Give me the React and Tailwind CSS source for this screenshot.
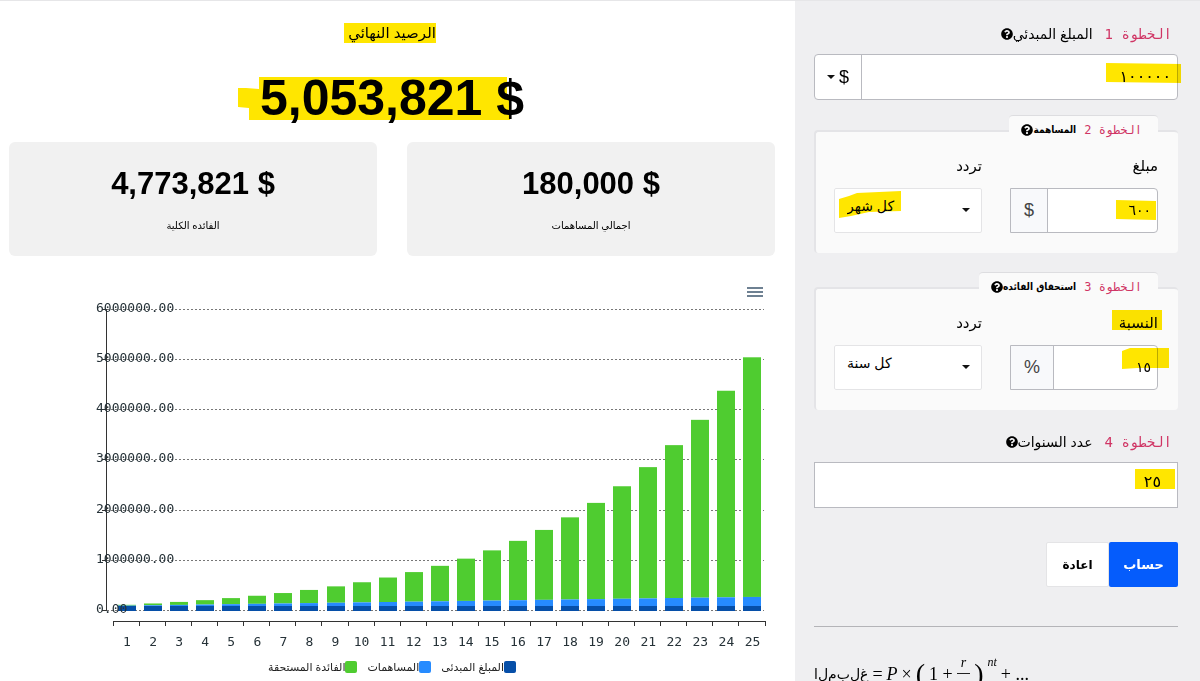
import React, { useState } from 'react';
import { FaQuestionCircle } from 'react-icons/fa';

const INITIAL = 100000;
const YEARLY = 7200;
const RATE = 0.15;
const YEARS = 25;

const buildRows = () => {
  const rows = [];
  let balance = INITIAL;
  for (let year = 1; year <= YEARS; year++) {
    balance = (balance + YEARLY) * (1 + RATE);
    rows.push({ year, balance, contributed: INITIAL + YEARLY * year });
  }
  return rows;
};

const Highlight = ({ className, points, viewBox }) => (
  <svg
    aria-hidden="true"
    viewBox={viewBox}
    preserveAspectRatio="none"
    className={`absolute pointer-events-none mix-blend-multiply ${className}`}
  >
    <polygon points={points} fill="#ffe600" />
  </svg>
);

const Caret = ({ className }) => (
  <svg aria-hidden="true" viewBox="0 0 8 4" className={`h-1 w-2 ${className}`}>
    <path d="M0 0h8L4 4z" fill="#111" />
  </svg>
);

const Step = ({ number, small, children }) => (
  <span className="inline-flex items-center">
    <code className={`font-['DejaVu_Sans_Mono',monospace] text-[#d03565] ${small ? 'text-[12px]' : 'text-[14px]'}`}>
      الخطوة {number}
    </code>
    <span
      className={
        small
          ? "ms-2 font-['DejaVu_Sans_Condensed','DejaVu_Sans',sans-serif] text-[10px] font-bold"
          : 'ms-3 text-[14px]'
      }
    >
      {children}
    </span>
    <FaQuestionCircle className="size-3 shrink-0" />
  </span>
);

const StatCard = ({ value, label }) => (
  <div className="flex h-[114px] flex-col items-center rounded-md bg-[#f1f1f1] pt-6">
    <p dir="ltr" className="text-[31px] leading-9 font-bold">{value}</p>
    <p className="mt-4 text-[10px] leading-4">{label}</p>
  </div>
);

const AmountField = ({ id, label, unit, defaultValue, labelMark, mark }) => (
  <div>
    <label htmlFor={id} className="relative block w-fit text-[15px] leading-6">
      {label}
      {labelMark}
    </label>
    <div className="relative mt-[10px] flex h-[45px] rounded-s border border-[#b9bac0] bg-white">
      <input
        id={id}
        type="text"
        defaultValue={defaultValue}
        className="min-w-0 flex-1 rounded-s px-[6px] text-[14px] outline-none"
      />
      <span className="flex items-center border-s border-[#b9bac0] bg-[#f8f9fb] px-[13px] text-[18px] text-[#444]">
        {unit}
      </span>
      {mark}
    </div>
  </div>
);

const FrequencyField = ({ id, options, mark }) => (
  <div>
    <label htmlFor={id} className="block text-[15px] leading-6">تردد</label>
    <div dir="ltr" className="relative mt-[10px]">
      <select
        id={id}
        className="h-[45px] w-full appearance-none rounded-xs border border-[#e4e4e6] bg-white pb-2 pl-3 text-[14px] outline-none"
      >
        {options.map((option) => (
          <option key={option}>{option}</option>
        ))}
      </select>
      <Caret className="pointer-events-none absolute top-5 right-3" />
      {mark}
    </div>
  </div>
);

const Panel = ({ title, number, children }) => (
  <fieldset className="mt-[15px] min-w-0">
    <legend className="contents">
      <span className="relative z-10 ms-5 -mb-[13px] flex h-7 w-fit items-center rounded-t-sm border-t border-[#dddde0] bg-[#fafafa] ps-4 pe-3">
        <Step number={number} small>{title}</Step>
      </span>
    </legend>
    <div className="rounded-sm border-t-2 border-e-2 border-[#e4e4e7] bg-[#fafafa] ps-5 pe-[18px] pt-[22px] pb-5">
      <div className="grid grid-cols-2 gap-7">{children}</div>
    </div>
  </fieldset>
);

const GrowthChart = ({ rows }) => {
  const base = 331;
  const scale = 50.2 / 1000000;
  const left = 104;
  const step = 26.06;
  const ticks = [0, 1, 2, 3, 4, 5, 6];

  return (
    <svg
      viewBox="0 0 766 376"
      role="img"
      aria-label="نمو الرصيد"
      className="block w-full font-['DejaVu_Sans_Mono',monospace] text-[13px]"
      direction="ltr"
    >
      <g stroke="#6e8192" strokeWidth="2">
        <path d="M738 8h16M738 12h16M738 16h16" />
      </g>
      <g stroke="#777" strokeDasharray="2 2">
        {ticks.map((n) => (
          <line key={n} x1="98" x2="755" y1={Math.round(base - n * 50.2) - 0.5} y2={Math.round(base - n * 50.2) - 0.5} />
        ))}
      </g>
      {rows.map(({ year, balance, contributed }) => {
        const x = Math.round(left + (year - 0.5) * step - 8);
        return (
          <g key={year}>
            <rect x={x} y={base - balance * scale} width="18" height={(balance - contributed) * scale} fill="#4fcc30" />
            <rect x={x} y={base - contributed * scale} width="18" height={(contributed - INITIAL) * scale} fill="#268bff" />
            <rect x={x} y={base - INITIAL * scale} width="18" height={INITIAL * scale} fill="#064fa8" />
          </g>
        );
      })}
      <path d="M97.5 29v302" stroke="#333" fill="none" />
      <path d="M104 341.5h652" stroke="#333" fill="none" />
      <g stroke="#333">
        {[...rows.map((r) => r.year), 0].map((n) => (
          <line key={n} x1={Math.round(left + n * step) + 0.5} x2={Math.round(left + n * step) + 0.5} y1="341" y2="346" />
        ))}
        {ticks.map((n) => (
          <line key={n} x1="93" x2="98" y1={Math.round(base - n * 50.2) - 0.5} y2={Math.round(base - n * 50.2) - 0.5} />
        ))}
      </g>
      <g fill="#263238">
        {ticks.map((n) => (
          <text key={n} x="87" y={base - n * 50.2 + 2}>{(n * 1000000).toFixed(2)}</text>
        ))}
        {rows.map(({ year }) => (
          <text key={year} x={left + 1 + (year - 0.5) * step} y="366" textAnchor="middle">{year}</text>
        ))}
      </g>
    </svg>
  );
};

const LegendItem = ({ color, children }) => (
  <li className="flex items-center">
    <span className={`size-3 rounded-xs ${color}`} />
    {children}
  </li>
);

const Formula = () => (
  <p dir="ltr" className="flex items-center gap-1 font-['Liberation_Serif',serif] text-[18px] leading-6 whitespace-nowrap">
    <bdo dir="ltr" className="font-['DejaVu_Sans',sans-serif] text-[14px]">
      {[...'المبلغ'].join('\u200c')}
    </bdo>
    <span>=</span>
    <i>P</i>
    <span>×</span>
    <span className="text-[28px] leading-6">(</span>
    <span>1 +</span>
    <span className="flex flex-col items-center text-[14px] leading-5">
      <i className="border-b border-[#222] px-1">r</i>
      <i>n</i>
    </span>
    <span className="text-[28px] leading-6">)</span>
    <sup className="-top-3 text-[12px] italic">nt</sup>
    <span>+ ...</span>
  </p>
);

export default function App() {
  const [rows] = useState(buildRows);

  return (
    <div
      dir="rtl"
      className="grid h-screen grid-cols-[27fr_53fr] overflow-hidden border-t border-[#e6e6e8] bg-white font-['Liberation_Sans','DejaVu_Sans',sans-serif] text-black"
    >
      <aside className="bg-[#efeff1] ps-[22px] pe-[19px] pt-[21px]">
        <form onSubmit={(e) => e.preventDefault()}>
          <label htmlFor="initial" className="flex h-6 items-center ps-[6px]">
            <Step number="1">المبلغ المبدئي</Step>
          </label>
          <div className="relative mt-2 flex h-[46px] rounded border border-[#b9bac0] bg-white">
            <input
              id="initial"
              type="text"
              defaultValue="١٠٠٠٠٠"
              className="min-w-0 flex-1 rounded-s px-[6px] text-[16px] outline-none"
            />
            <button type="button" aria-label="العملة" className="flex w-[47px] items-center justify-center gap-1 border-s border-[#b9bac0] text-[18px]">
              $
              <Caret />
            </button>
            <Highlight className="-right-1 top-2 h-5 w-[75px]" viewBox="0 0 75 20" points="0,0 75,1 75,20 0,19" />
          </div>

          <Panel number="2" title="المساهمة">
            <AmountField
              id="amount"
              label="مبلغ"
              unit="$"
              defaultValue="٦٠٠"
              mark={<Highlight className="right-px top-[11px] h-5 w-10" viewBox="0 0 40 20" points="0,0 40,1 40,20 0,19" />}
            />
            <FrequencyField
              id="amount-frequency"
              options={['كل شهر', 'كل سنة']}
              mark={
                <Highlight
                  className="left-[5px] top-[3px] h-[27px] w-[62px]"
                  viewBox="0 0 62 27"
                  points="0,8 10,5 18,2 40,1 62,0 62,20 30,21 12,25 0,27"
                />
              }
            />
          </Panel>

          <div className="mt-[19px]">
            <Panel number="3" title="استحقاق الفائده">
              <AmountField
                id="rate"
                label="النسبة"
                unit="%"
                defaultValue="١٥"
                labelMark={<Highlight className="-right-1 -top-px h-5 w-[50px]" viewBox="0 0 50 20" points="0,0 50,0 50,20 0,20" />}
                mark={<Highlight className="-right-3 top-[2px] h-[21px] w-[47px]" viewBox="0 0 47 21" points="0,3 8,0 47,0 47,20 15,20 0,21" />}
              />
              <FrequencyField id="rate-frequency" options={['كل سنة', 'كل شهر']} />
            </Panel>
          </div>

          <label htmlFor="years" className="mt-5 flex h-6 items-center ps-[6px]">
            <Step number="4">عدد السنوات</Step>
          </label>
          <div className="relative mt-2">
            <input
              id="years"
              type="text"
              defaultValue="٢٥"
              className="h-[46px] w-full border border-[#b9bac0] bg-white px-4 pb-2 text-[16px] outline-none"
            />
            <Highlight className="right-[3px] top-[7px] h-5 w-10" viewBox="0 0 40 20" points="0,0 40,0 40,20 0,20" />
          </div>

          <div className="mt-[34px] flex">
            <button type="submit" className="h-[45px] w-[69px] rounded-xs bg-[#055cfc] text-[13px] font-bold text-white">
              حساب
            </button>
            <button type="reset" className="h-[45px] w-[63px] rounded-xs border border-[#e4e4e6] bg-white text-[12px] font-bold">
              اعادة
            </button>
          </div>
        </form>
        <hr className="mt-[39px] mb-[26px] border-[#b4b4b8]" />
        <Formula />
      </aside>

      <main className="min-w-0 ps-5 pe-[9px] pt-5">
        <div className="flex flex-col items-center">
          <h1 className="relative text-[15px] leading-6">
            الرصيد النهائي
            <Highlight className="-left-1 top-[2px] h-5 w-[92px]" viewBox="0 0 92 20" points="0,0 92,0 92,20 0,20" />
          </h1>
          <p dir="ltr" className="relative mt-[25px] text-[50px] leading-14 font-bold">
            5,053,821 $
            <Highlight
              className="-left-[22px] top-[7px] h-[43px] w-[272px]"
              viewBox="0 0 272 43"
              points="21,0 269,0 269,22 272,22 272,43 11,43 11,31 0,30 0,11 8,11 21,12"
            />
          </p>
        </div>

        <div className="mt-4 grid grid-cols-2 gap-[30px]">
          <StatCard value="180,000 $" label="اجمالي المساهمات" />
          <StatCard value="4,773,821 $" label="الفائده الكلية" />
        </div>

        <div className="mt-6">
          <GrowthChart rows={rows} />
          <ul className="mt-[3px] flex justify-center gap-[10px] text-[11px] leading-4 text-[#222]">
            <LegendItem color="bg-[#064fa8]">المبلغ المبدئى</LegendItem>
            <LegendItem color="bg-[#268bff]">المساهمات</LegendItem>
            <LegendItem color="bg-[#4fcc30]">الفائدة المستحقة</LegendItem>
          </ul>
        </div>
      </main>
    </div>
  );
}
